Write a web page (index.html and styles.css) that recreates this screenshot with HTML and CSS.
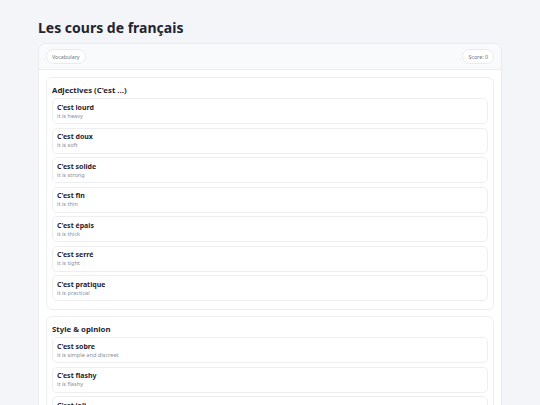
FILE: index.html
```html
<!DOCTYPE html>
<html lang="fr">
  <head>
    <meta charset="UTF-8" />
    <meta name="viewport" content="width=device-width, initial-scale=1.0" />
    <title>Les cours de français</title>
    <link rel="stylesheet" href="styles.css">
  </head>
  <body>
    <div class="page">
      <h1 class="page-title">Les cours de français</h1>
      <div class="panel">
        <div class="panel-head">
          <span class="pill">Vocabulary</span>
          <span class="pill">Score: 0</span>
        </div>
        <div class="panel-body">
          <div class="group">
            <h2>Adjectives (C'est ...)</h2>
            <div class="words">
              <div class="word"><p class="fr">C'est lourd</p><p class="en">it is heavy</p></div>
              <div class="word"><p class="fr">C'est doux</p><p class="en">it is soft</p></div>
              <div class="word"><p class="fr">C'est solide</p><p class="en">it is strong</p></div>
              <div class="word"><p class="fr">C'est fin</p><p class="en">it is thin</p></div>
              <div class="word"><p class="fr">C'est épais</p><p class="en">it is thick</p></div>
              <div class="word"><p class="fr">C'est serré</p><p class="en">it is tight</p></div>
              <div class="word"><p class="fr">C'est pratique</p><p class="en">it is practical</p></div>
            </div>
          </div>
          <div class="group">
            <h2>Style &amp; opinion</h2>
            <div class="words">
              <div class="word"><p class="fr">C'est sobre</p><p class="en">it is simple and discreet</p></div>
              <div class="word"><p class="fr">C'est flashy</p><p class="en">it is flashy</p></div>
              <div class="word"><p class="fr">C'est joli</p><p class="en">it is pretty</p></div>
            </div>
          </div>
        </div>
      </div>
    </div>
  </body>
</html>
```
FILE: styles.css
```css
body {
  margin: 0;
  background-color: #f4f5f9;
  font-family: "Noto Sans", "Open Sans", sans-serif;
  color: #1f2430;
}
.page {
  padding: 0 38px;
}
.page-title {
  margin: 0;
  padding-top: 18px;
  padding-bottom: 5px;
  font-size: 14px;
  line-height: 20px;
  font-weight: 700;
}
.panel {
  background-color: #fff;
  border: 1px solid #e9ebf0;
  border-radius: 8px;
  overflow: hidden;
}
.panel-head {
  display: flex;
  justify-content: space-between;
  align-items: center;
  height: 25px;
  padding: 0 7px;
  background-color: #f9fafc;
  border-bottom: 1px solid #eceef2;
}
.pill {
  font-size: 5.3px;
  line-height: 8px;
  color: #6b7280;
  padding: 2.5px 5px;
  border: 1px solid #e8eaee;
  border-radius: 10px;
  background-color: #fff;
}
.panel-body {
  padding: 7px;
  display: flex;
  flex-direction: column;
  gap: 6px;
}
.group {
  border: 1px solid #eceef2;
  border-radius: 6px;
  padding: 6px 5px 8px;
}
.group h2 {
  margin: 0;
  font-size: 7.8px;
  line-height: 12px;
  font-weight: 700;
}
.words {
  margin-top: 2px;
  display: flex;
  flex-direction: column;
  gap: 3.5px;
}
.word {
  border: 1px solid #eceef2;
  border-radius: 5px;
  padding: 3.5px 4px;
}
.word p {
  margin: 0;
}
.fr {
  font-size: 7px;
  line-height: 9px;
  font-weight: 700;
}
.en {
  font-size: 5.6px;
  line-height: 8px;
  color: #8a909c;
}
```
